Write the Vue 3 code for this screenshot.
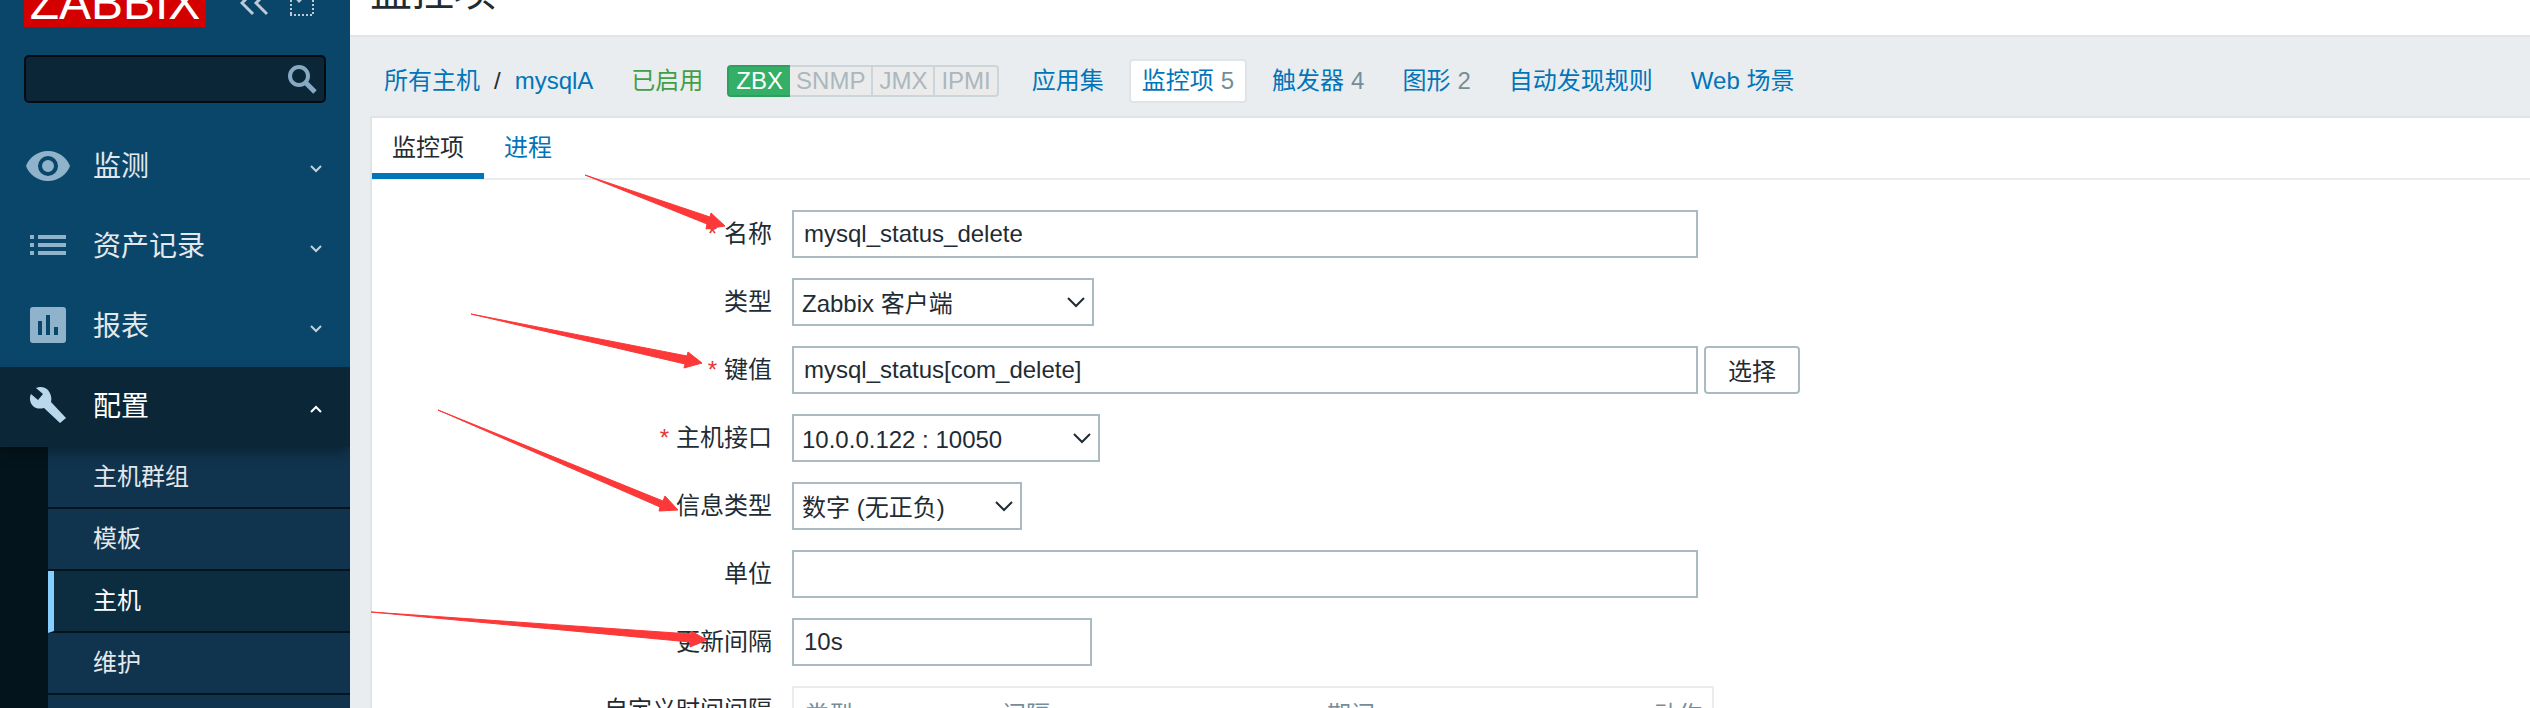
<script setup>
import { ref } from 'vue'

const search = ref('')

const menu = [
  { id: 'monitoring', label: '监测' },
  { id: 'inventory', label: '资产记录' },
  { id: 'reports', label: '报表' },
  { id: 'configuration', label: '配置', open: true }
]

const submenu = [
  { label: '主机群组' },
  { label: '模板' },
  { label: '主机', active: true },
  { label: '维护' }
]

const interfaces = ['SNMP', 'JMX', 'IPMI']

const sections = [
  { label: '应用集' },
  { label: '监控项', count: 5, active: true },
  { label: '触发器', count: 4 },
  { label: '图形', count: 2 },
  { label: '自动发现规则' },
  { label: 'Web 场景' }
]

const fields = ref([
  { id: 'name', label: '名称', required: true, kind: 'text', size: 'wide', value: 'mysql_status_delete' },
  { id: 'type', label: '类型', kind: 'select', size: 'type', value: 'Zabbix 客户端' },
  { id: 'key', label: '键值', required: true, kind: 'text', size: 'wide', value: 'mysql_status[com_delete]', button: '选择' },
  { id: 'interface', label: '主机接口', required: true, kind: 'select', size: 'interface', value: '10.0.0.122 : 10050' },
  { id: 'value-type', label: '信息类型', kind: 'select', size: 'value', value: '数字 (无正负)' },
  { id: 'units', label: '单位', kind: 'text', size: 'wide', value: '' },
  { id: 'delay', label: '更新间隔', kind: 'text', size: 'short', value: '10s' }
])

const arrows = [
  '585,175 710,217 711,213 725,226 706,229 707,224',
  '471,314 687,356 688,352 702,363 684,368 685,364',
  '438,410 663,501 665,496 678,510 659,511 660,507',
  '371,612 691,634 691,631 707,640 690,647 690,642'
]
</script>

<template>
  <div class="page">
    <aside class="sidebar">
      <div class="brand">
        <a class="logo" href="#">ZABBIX</a>
        <button class="tool" type="button" aria-label="收起">
          <svg width="28" height="26" viewBox="0 0 28 26"><path d="M13 2 2 13l11 11M27 2 16 13l11 11" fill="none" stroke="currentColor" stroke-width="3" /></svg>
        </button>
        <button class="tool" type="button" aria-label="隐藏">
          <svg width="24" height="26" viewBox="0 0 24 26">
            <path d="M1 2v23M0 25h24M23 2v23M0 3h24" fill="none" stroke="currentColor" stroke-width="2" stroke-dasharray="2 2" />
            <path d="M2 5l7 8 5-5-8-7z" fill="currentColor" />
          </svg>
        </button>
      </div>

      <form class="search" role="search" @submit.prevent>
        <input v-model="search" type="text" aria-label="搜索" />
        <button type="submit" aria-label="搜索">
          <svg width="30" height="30" viewBox="0 0 30 30"><circle cx="12" cy="12" r="9" fill="none" stroke="currentColor" stroke-width="4" /><path d="M18 18l10 10" stroke="currentColor" stroke-width="5" /></svg>
        </button>
      </form>

      <nav>
        <ul class="menu">
          <li v-for="item in menu" :key="item.id">
            <a class="menu-link" :class="{ open: item.open }" href="#">
              <svg class="menu-icon" width="48" height="48" viewBox="0 0 48 48" fill="currentColor">
                <path v-if="item.id === 'monitoring'" fill-rule="evenodd" d="M24 8C13 8 5 15 2 23c3 8 11 15 22 15s19-7 22-15C43 15 35 8 24 8zm0 25a10 10 0 1 1 0-20 10 10 0 0 1 0 20zm0-4a6 6 0 1 0 0-12 6 6 0 0 0 0 12z" />
                <path v-else-if="item.id === 'inventory'" d="M6 12h4v4H6zm8 0h28v4H14zM6 20h4v4H6zm8 0h28v4H14zM6 28h4v4H6zm8 0h28v4H14z" />
                <path v-else-if="item.id === 'reports'" fill-rule="evenodd" d="M9 4h30a3 3 0 0 1 3 3v30a3 3 0 0 1-3 3H9a3 3 0 0 1-3-3V7a3 3 0 0 1 3-3zm5 14v14h4V18zm8-6v20h4V12zm8 12v8h4v-8z" />
                <path v-else d="M42 35 27 19c1-4 0-8-3-12-3-3-8-4-12-2l7 6-5 6-7-6c-2 4-1 9 2 12 3 3 7 3 11 2l16 15z" />
              </svg>
              <span>{{ item.label }}</span>
              <svg class="chevron" width="12" height="8" viewBox="0 0 12 8"><path :d="item.open ? 'M1 7l5-5 5 5' : 'M1 1l5 5 5-5'" fill="none" stroke="currentColor" stroke-width="2" /></svg>
            </a>
            <ul v-if="item.open" class="submenu">
              <li v-for="sub in submenu" :key="sub.label">
                <a href="#" :class="{ active: sub.active }">{{ sub.label }}</a>
              </li>
            </ul>
          </li>
        </ul>
      </nav>
    </aside>

    <main class="main">
      <header class="title"><h1>监控项</h1></header>

      <nav class="object-nav">
        <a href="#">所有主机</a>
        <span class="slash">/</span>
        <a href="#">mysqlA</a>
        <span class="enabled">已启用</span>
        <span class="badges">
          <span class="badge on">ZBX</span>
          <span v-for="name in interfaces" :key="name" class="badge">{{ name }}</span>
        </span>
        <a v-for="s in sections" :key="s.label" class="section" :class="{ active: s.active }" href="#">{{ s.label }}<span v-if="s.count" class="count">{{ s.count }}</span></a>
      </nav>

      <section class="card">
        <nav class="tabs">
          <a class="tab active" href="#">监控项</a>
          <a class="tab" href="#">进程</a>
        </nav>

        <form class="form" @submit.prevent>
          <div v-for="f in fields" :key="f.id" class="row">
            <label :for="f.id"><span v-if="f.required" class="star">*</span>{{ f.label }}</label>
            <div class="control">
              <input v-if="f.kind === 'text'" :id="f.id" v-model="f.value" type="text" :class="f.size" />
              <span v-else class="select" :class="f.size">
                <select :id="f.id" v-model="f.value"><option>{{ f.value }}</option></select>
                <svg width="18" height="12" viewBox="0 0 18 12"><path d="M1 1l8 8 8-8" fill="none" stroke="currentColor" stroke-width="2" /></svg>
              </span>
              <button v-if="f.button" class="pick" type="button">{{ f.button }}</button>
            </div>
          </div>
          <div class="row">
            <span id="intervals" class="label">自定义时间间隔</span>
            <table class="intervals" aria-labelledby="intervals">
              <thead>
                <tr>
                  <th class="c-type">类型</th>
                  <th class="c-interval">间隔</th>
                  <th class="c-period">期间</th>
                  <th>动作</th>
                </tr>
              </thead>
            </table>
          </div>
        </form>
      </section>
    </main>

    <svg class="arrows" aria-hidden="true">
      <polygon v-for="a in arrows" :key="a" :points="a" fill="#fc3838" stroke="#fc3838" />
    </svg>
  </div>
</template>

<style>
body {
  margin: 0;
  overflow: hidden;
}
</style>

<style scoped>
.page {
  position: relative;
  display: flex;
  height: 100vh;
  overflow: hidden;
  background: #e9edf0;
  color: #1f2c33;
  font-family: "Liberation Sans", "Noto Sans CJK SC", sans-serif;
  font-size: 24px;
  line-height: 36px;
}
.page * { box-sizing: border-box; }
a { color: #0275b8; text-decoration: none; }
ul { list-style: none; margin: 0; padding: 0; }
button, input, select { font: inherit; color: inherit; margin: 0; }

.sidebar {
  display: flex;
  flex-direction: column;
  flex: 0 0 350px;
  min-width: 0;
  background: #0a466a;
}
.brand {
  display: flex;
  flex-shrink: 0;
  align-items: center;
  gap: 22px;
  height: 48px;
  margin: -21px 24px 28px;
}
.logo {
  width: 182px;
  margin-right: 12px;
  background: #d40000;
  color: #fff;
  font-size: 48px;
  line-height: 48px;
  text-align: center;
}
.tool {
  display: flex;
  padding: 0;
  border: 0;
  background: none;
  color: #bccbd6;
}
.search {
  display: flex;
  flex-shrink: 0;
  align-items: center;
  height: 48px;
  margin: 0 24px 24px;
  border: 2px solid #040c12;
  border-radius: 5px;
  background: #0a2637;
}
.search input {
  flex: 1;
  min-width: 0;
  padding: 0 10px;
  border: 0;
  outline: 0;
  background: none;
  color: #fff;
}
.search button {
  display: flex;
  padding: 0 7px;
  border: 0;
  background: none;
  color: #87a9c2;
}
.sidebar nav {
  flex: 1;
  min-height: 0;
  overflow: hidden;
}
.menu-link {
  position: relative;
  display: flex;
  align-items: center;
  height: 80px;
  padding: 0 28px 0 24px;
  color: #e3e8ec;
  font-size: 28px;
}
.menu-link.open {
  background: #0a2637;
  box-shadow: 0 6px 12px rgba(0, 0, 0, 0.3);
  color: #fff;
}
.menu-icon { margin-right: 21px; color: #8fb3cb; }
.open .menu-icon { color: #b9d8ec; }
.chevron { margin: 4px 0 0 auto; color: #c2d1da; }
.open .chevron { color: #fff; }
.submenu {
  padding-left: 48px;
  background: linear-gradient(to right, #04141c 48px, #10344d 48px);
  min-height: 320px;
}
.submenu a {
  display: block;
  height: 62px;
  padding-left: 45px;
  border-bottom: 2px solid #04141c;
  background: #10344d;
  color: #e3e8ec;
  line-height: 60px;
}
.submenu a.active {
  padding-left: 39px;
  border-left: 6px solid #85ceff;
  background: #0c2d40;
  color: #fff;
}

.main {
  flex: 1;
  min-width: 0;
  display: flex;
  flex-direction: column;
}
.title {
  padding: 0 20px 19px;
  border-bottom: 2px solid #dfe4e7;
  background: #fff;
}
.title h1 {
  margin: -32px 0 0;
  font-size: 42px;
  font-weight: 400;
  line-height: 48px;
}
.object-nav {
  display: flex;
  align-items: center;
  padding: 22px 34px 13px;
  line-height: 40px;
  white-space: nowrap;
}
.slash { margin: 0 14px; }
.enabled { margin: 0 24px 0 38px; color: #429e47; }
.badges {
  display: flex;
  margin-right: 20px;
  line-height: 28px;
}
.badge {
  padding: 0 6px;
  border: 2px solid #ccd5d9;
  border-left-width: 0;
  background: #ebebeb;
  color: #aab7bf;
}
.badge.on {
  padding: 0 7px;
  border: 2px solid #2f9f5e;
  border-right-width: 0;
  border-radius: 4px 0 0 4px;
  background: #34af67;
  color: #fff;
}
.badge:last-child { border-radius: 0 4px 4px 0; }
.section {
  margin-right: 12px;
  padding: 0 11px;
  border: 2px solid transparent;
  border-radius: 4px;
}
.section.active { border-color: #dfe4e7; background: #fff; }
.count { margin-left: 7px; color: #768d99; }

.card {
  flex: 1;
  margin-left: 20px;
  border: 2px solid #dfe4e7;
  border-width: 2px 0 0 2px;
  background: #fff;
}
.tabs {
  display: flex;
  height: 62px;
  border-bottom: 2px solid #e9edf0;
}
.tab {
  height: 61px;
  padding: 0 20px;
  line-height: 60px;
}
.tab.active { border-bottom: 6px solid #0275b8; color: #1f2c33; }

.form {
  display: grid;
  gap: 20px;
  padding-top: 30px;
}
.row {
  display: grid;
  grid-template-columns: 400px 1fr;
  column-gap: 20px;
  line-height: 48px;
}
label, .label { text-align: right; }
label, .label, .control { height: 48px; }
.star { margin-right: 7px; color: #e33734; }
.control { display: flex; gap: 6px; }
.control input, .select select {
  height: 48px;
  border: 2px solid #acbbc2;
  border-radius: 0;
  outline: 0;
  background: #fff;
}
.control input { padding: 0 10px; }
.select { position: relative; display: flex; }
.select select {
  width: 100%;
  padding: 0 8px;
  appearance: none;
}
.select svg {
  position: absolute;
  top: 19px;
  right: 9px;
  pointer-events: none;
}
.wide { width: 906px; }
.short { width: 300px; }
.type { width: 302px; }
.interface { width: 308px; }
.value { width: 230px; }
.pick {
  width: 96px;
  height: 48px;
  padding: 0;
  border: 2px solid #acbbc2;
  border-radius: 4px;
  background: #fff;
}
.intervals {
  width: 922px;
  border: 2px solid #e9edf0;
  border-collapse: separate;
  border-spacing: 0;
  table-layout: fixed;
}
.intervals th {
  padding: 3px 0 3px 11px;
  color: #768d99;
  font-weight: 400;
  text-align: left;
}
.c-type { width: 197px; }
.c-interval { width: 325px; }
.c-period { width: 327px; }

.arrows {
  position: absolute;
  top: 0;
  left: 0;
  width: 100%;
  height: 100%;
  pointer-events: none;
}
</style>
